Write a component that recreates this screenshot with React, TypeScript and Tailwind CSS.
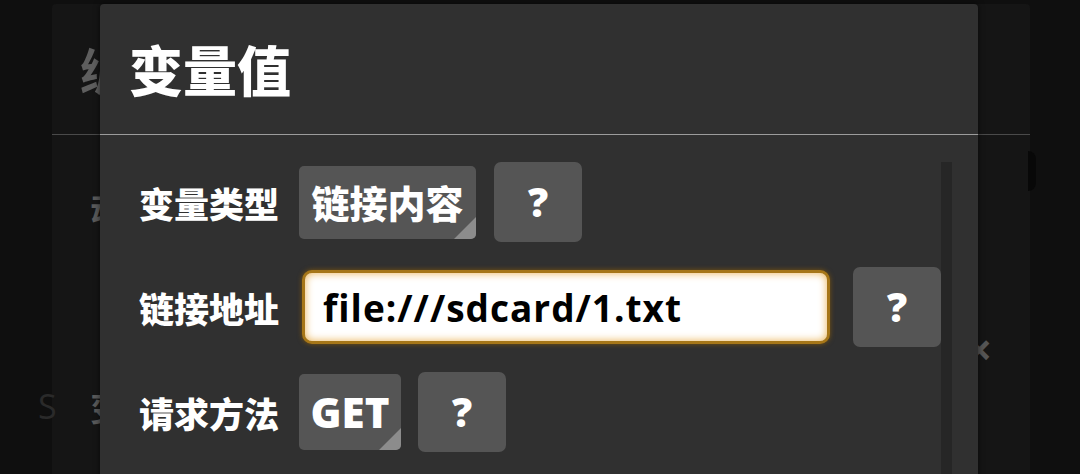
import React from "react";

const cjk = { fontFamily: '"Noto Sans CJK SC", "Noto Sans", sans-serif' };
const latin = { fontFamily: '"Open Sans", "Noto Sans CJK SC", sans-serif' };

function Corner() {
  return (
    <svg className="absolute right-0 bottom-0" width="22" height="22" viewBox="0 0 22 22">
      <polygon points="22,0 22,22 0,22" fill="#8c8c8c" />
    </svg>
  );
}

function Spinner({ text, w, h, latinText }: { text: string; w: string; h: string; latinText?: boolean }) {
  return (
    <div
      className={`relative ${w} ${h} bg-[#555555] rounded-[5px] overflow-hidden flex items-center justify-center text-white font-black`}
      style={latinText ? latin : cjk}
    >
      <span className={latinText ? "text-[42px] leading-none font-extrabold" : "text-[38px] leading-none"}>{text}</span>
      <Corner />
    </div>
  );
}

function Help() {
  return (
    <div className="w-[88px] h-[80px] bg-[#555555] rounded-[7px] flex items-center justify-center text-white font-extrabold text-[40px] leading-none" style={latin}>
      ?
    </div>
  );
}

function Label({ text }: { text: string }) {
  return (
    <div className="w-[141px] text-white font-black text-[35px] leading-none whitespace-nowrap" style={cjk}>
      {text}
    </div>
  );
}

export default function App() {
  return (
    <div className="relative w-[1080px] h-[474px] bg-[#0f0f0f] overflow-hidden">
      {/* background dialog (dimmed) */}
      <div className="absolute left-[52px] top-[4px] w-[978px] h-[490px] bg-[#151515] rounded-t-[4px] flex flex-col">
        <div className="h-[130px] flex items-center pl-[28px] text-[50px] font-bold text-[#5e5e5e]" style={cjk}>
          编辑变量
        </div>
        <div className="h-px bg-[#4a4a4a]" />
        <div className="relative flex-1">
          <div className="absolute left-[38px] top-[48px] text-[34px] font-bold text-[#5a5a5a]" style={cjk}>动作</div>
          <div className="absolute left-[38px] top-[246px] text-[34px] font-bold text-[#5a5a5a]" style={cjk}>变量</div>
          <div className="absolute left-[-14px] top-[246px] text-[34px] text-[#2a2a2a]" style={latin}>S</div>
          <div className="absolute left-[915px] top-[192px] text-[44px] font-bold text-[#555] leading-none" style={latin}>×</div>
          <div className="absolute left-[976px] top-[16px] w-[8px] h-[40px] rounded-r-full bg-[#080808]" />
        </div>
      </div>

      {/* main dialog */}
      <div className="absolute left-[100px] top-[4px] w-[878px] h-[490px] bg-[#303030] rounded-t-[4px] flex flex-col shadow-[0_0_6px_rgba(0,0,0,0.6)]">
        <div className="h-[130px] flex items-center pl-[29px] text-white font-black text-[54px] leading-none" style={cjk}>
          变量值
        </div>
        <div className="h-px bg-[#9c9c9c]" />
        <div className="relative flex-1 flex">
          <div className="flex-1 flex flex-col pt-[27px] pl-[39px] gap-[25px]">
            <div className="h-[80px] flex items-center">
              <Label text="变量类型" />
              <div className="ml-[19px] mr-[18px]">
                <Spinner text="链接内容" w="w-[177px]" h="h-[73px]" />
              </div>
              <Help />
            </div>
            <div className="h-[80px] flex items-center">
              <Label text="链接地址" />
              <div className="ml-[22px] mr-[23px] w-[528px] h-[74px] rounded-[10px] border-[3px] border-[#a67618] bg-white shadow-[0_0_5px_#7a5410,inset_0_0_8px_#eab050] flex items-center pl-[18px]">
                <span className="text-black font-bold text-[37px] leading-none tracking-[1px]" style={latin}>
                  file:///sdcard/1.txt
                </span>
              </div>
              <Help />
            </div>
            <div className="h-[80px] flex items-center">
              <Label text="请求方法" />
              <div className="ml-[19px] mr-[17px]">
                <Spinner text="GET" w="w-[102px]" h="h-[76px]" latinText />
              </div>
              <Help />
            </div>
          </div>
          <div className="w-[11px] mt-[27px] mr-[26px] bg-[#262626]" />
        </div>
      </div>
    </div>
  );
}
